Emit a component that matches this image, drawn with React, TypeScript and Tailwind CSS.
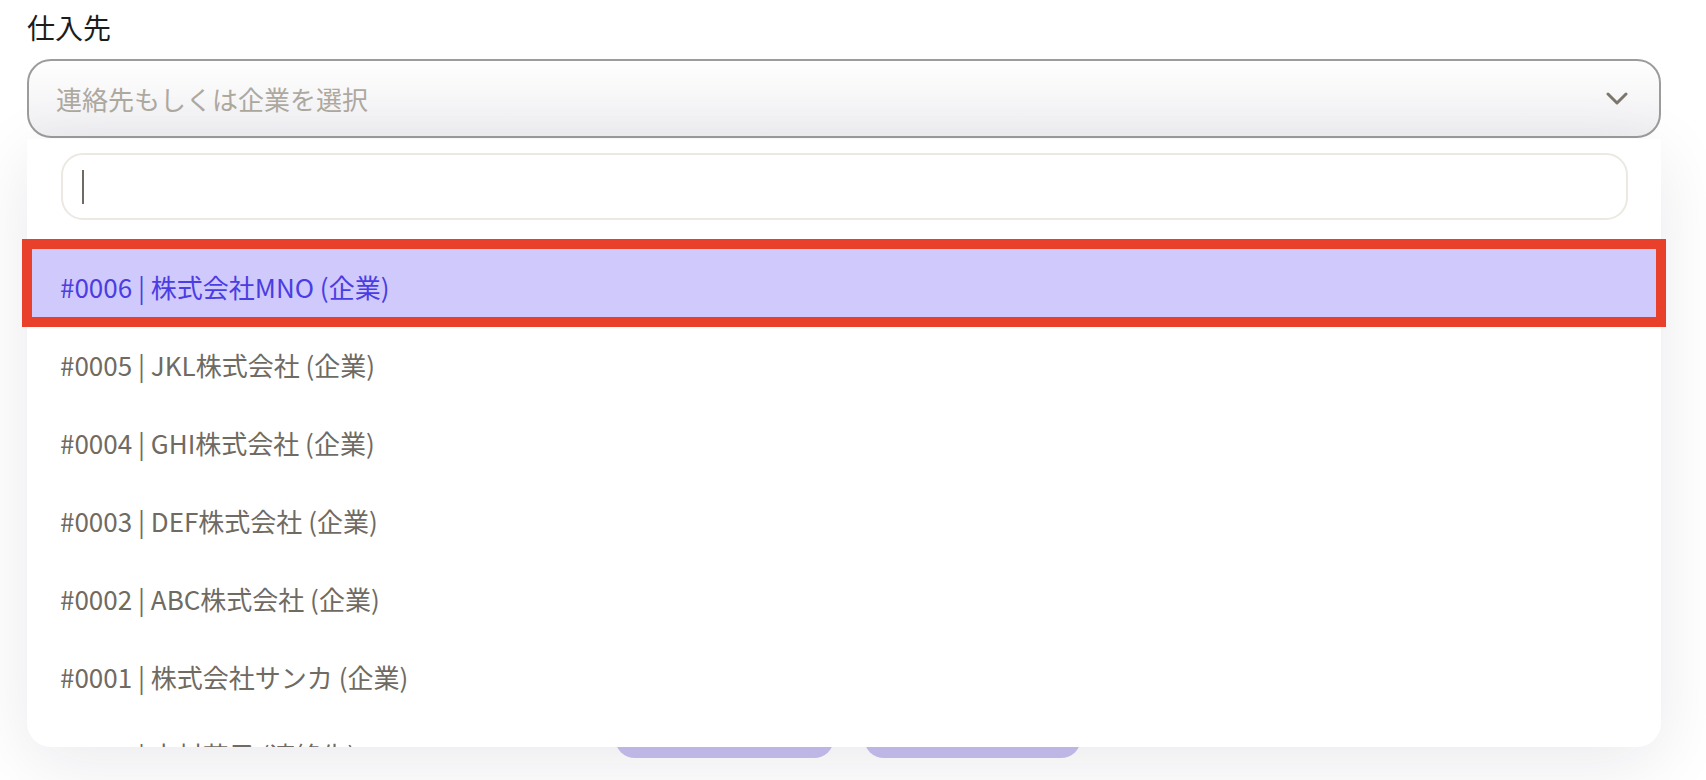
import React from "react";

const items = [
  "#0006 | 株式会社MNO (企業)",
  "#0005 | JKL株式会社 (企業)",
  "#0004 | GHI株式会社 (企業)",
  "#0003 | DEF株式会社 (企業)",
  "#0002 | ABC株式会社 (企業)",
  "#0001 | 株式会社サンカ (企業)",
  "#0007 | 木村花子 (連絡先)",
];

export default function App() {
  return (
    <div
      className="relative h-[780px] w-[1706px] overflow-hidden bg-white pl-[27px] pr-[45px]"
      style={{ fontFamily: '"Noto Sans CJK JP", "Noto Sans", sans-serif' }}
    >
      <div className="mt-[7px] h-[40px] text-[28px] leading-[40px] text-[#1c1c1c]">仕入先</div>

      <div className="relative mt-[12px]">
        <div className="flex h-[79px] items-center justify-between rounded-[24px] border-2 border-[#9c9c9c] bg-gradient-to-b from-[#fefefe] to-[#f0f0f3] pl-[27px] pr-[31px]">
          <span className="text-[26px] leading-[36px] text-[#aea99f]">連絡先もしくは企業を選択</span>
          <svg width="22" height="13" viewBox="0 0 22 13" fill="none">
            <polyline
              points="2,2 11,11 20,2"
              stroke="#7d766c"
              strokeWidth="3"
              strokeLinecap="round"
              strokeLinejoin="round"
            />
          </svg>
        </div>

        <div className="absolute left-0 right-0 top-[calc(100%+1px)] z-10 h-[608px] overflow-hidden rounded-b-[24px] bg-white shadow-[0_16px_70px_rgba(20,20,50,0.09)]">
          <div className="ml-[34px] mr-[33px] mt-[14px] flex h-[67px] items-center rounded-[22px] border-2 border-[#ece8e2] bg-white pl-[19px]">
            <span className="h-[34px] w-[2px] bg-[#6f6a64]" />
          </div>
          <div className="mt-[28px] flex flex-col">
            {items.map((t, i) => (
              <div
                key={t}
                className={
                  i === 0
                    ? "flex h-[78px] shrink-0 items-center bg-[#d0c9fb] pl-[33px] text-[26px] leading-[36px] text-[#4a3de3]"
                    : "flex h-[78px] shrink-0 items-center pl-[33px] text-[26px] leading-[36px] text-[#6f6a62]"
                }
              >
                {t}
              </div>
            ))}
          </div>
        </div>

        <div className="pointer-events-none absolute left-[-5px] right-[-5px] top-[180px] z-20 h-[88px] border-[10px] border-[#e8402a]" />
      </div>

      <div className="mt-[564px] flex justify-center gap-[30px] pl-[8px]">
        <div className="h-[56px] w-[219px] rounded-[20px] bg-[#c8c0f0]" />
        <div className="h-[56px] w-[217px] rounded-[20px] bg-[#c8c0f0]" />
      </div>
    </div>
  );
}
